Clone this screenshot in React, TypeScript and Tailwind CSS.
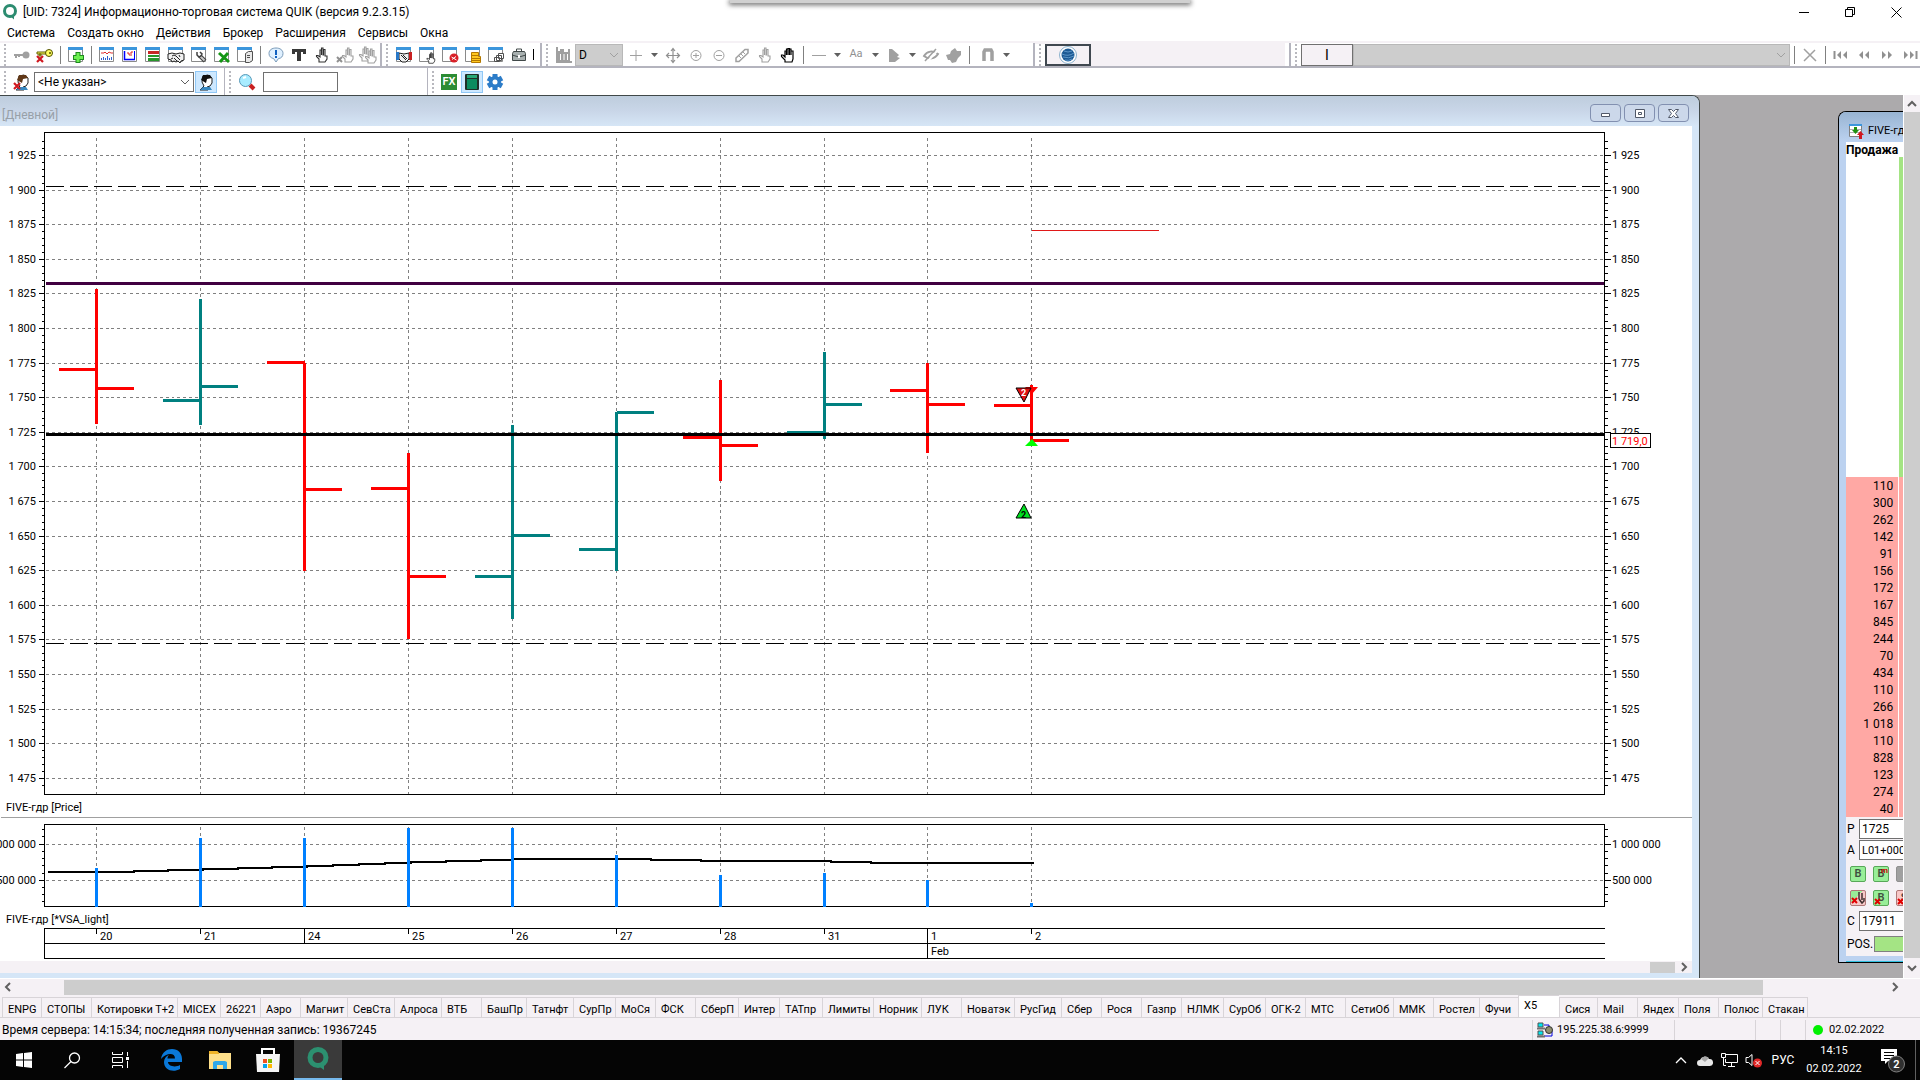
import { ReactNode } from "react"

const UI = "font-[Roboto,sans-serif]"

const TABS: [string, number][] = [
  ["ENPG", 39], ["СТОПЫ", 50], ["Котировки Т+2", 86], ["MICEX", 43], ["26221", 40], ["Аэро", 40],
  ["Магнит", 47], ["СевСта", 47], ["Алроса", 47], ["ВТБ", 40], ["БашПр", 45], ["Татнфт", 47],
  ["СурПр", 42], ["МоСя", 40], ["ФСК", 40], ["СберП", 43], ["Интер", 41], ["ТАТпр", 43],
  ["Лимиты", 51], ["Норник", 48], ["ЛУК", 40], ["Новатэк", 53], ["РусГид", 47], ["Сбер", 40],
  ["Рося", 40], ["Газпр", 40], ["НЛМК", 42], ["СурОб", 42], ["ОГК-2", 40], ["МТС", 40],
  ["СетиОб", 48], ["ММК", 40], ["Ростел", 46], ["Фучи", 39], ["X5", 41], ["Сися", 38],
  ["Mail", 40], ["Яндех", 41], ["Поля", 40], ["Полюс", 44], ["Стакан", 45],
]

const MENU = ["Система", "Создать окно", "Действия", "Брокер", "Расширения", "Сервисы", "Окна"]

const ASKS = [
  "110", "300", "262", "142", "91", "156", "172", "167", "845", "244",
  "70", "434", "110", "266", "1 018", "110", "828", "123", "274", "40",
]

const RED = "#ff0000"
const TEAL = "#008080"

// day label, x, high, low, open, close, colour, top of the volume bar
type Bar = { day: string; x: number; h: number; l: number; o: number; c: number; color: string; vol: number }

const BARS: Bar[] = [
  { day: "20", x: 96, h: 288, l: 423, o: 369, c: 388, color: RED, vol: 867 },
  { day: "21", x: 200, h: 298, l: 424, o: 400, c: 386, color: TEAL, vol: 837 },
  { day: "24", x: 304, h: 362, l: 570, o: 362, c: 489, color: RED, vol: 837 },
  { day: "25", x: 408, h: 452, l: 638, o: 488, c: 576, color: RED, vol: 827 },
  { day: "26", x: 512, h: 424, l: 618, o: 576, c: 535, color: TEAL, vol: 827 },
  { day: "27", x: 616, h: 411, l: 570, o: 549, c: 412, color: TEAL, vol: 854 },
  { day: "28", x: 720, h: 379, l: 480, o: 437, c: 445, color: RED, vol: 874 },
  { day: "31", x: 824, h: 351, l: 438, o: 432, c: 404, color: TEAL, vol: 872 },
  { day: "1", x: 927, h: 362, l: 452, o: 390, c: 404, color: RED, vol: 879 },
  { day: "2", x: 1031, h: 384, l: 440, o: 405, c: 440, color: RED, vol: 902 },
]

const priceY = (p: number) => Math.round(155 + (1925 - p) * 1.384)
const PRICES = Array.from({ length: 19 }, (_, i) => 1925 - i * 25)
const MINOR = Array.from({ length: 94 }, (_, i) => 1935 - i * 5)
const VOL_MINOR = [829, 836, 851, 858, 865, 873, 887, 894, 901]

const fmt = (n: number) => String(n).replace(/^(\d)(\d{3})$/, "$1 $2")

function Chart() {
  return (
    <svg viewBox="0 126 1692 835" className="block w-full bg-white text-[11px]">
      <g transform="translate(0.5 0.5)" shapeRendering="crispEdges" fill="none" stroke="#000">
        <g stroke="#808080" strokeDasharray="3 3">
          {PRICES.map((p) => (
            <path key={p} d={`M45 ${priceY(p)}H1603`} />
          ))}
          {BARS.map((b) => (
            <path key={b.day} d={`M${b.x} 137V794M${b.x} 826V906`} />
          ))}
          <path d="M45 844H1603M45 880H1603" />
        </g>
        <path d="M44 132H1604V794H44ZM44 824H1604V906H44Z" />
        <path d="M1604 928H44V958H1604M44 943H1604" />
        <path d="M0 817H1692" stroke="#a0a0a0" />
        {MINOR.map((p) => (
          <path key={p} d={`M41 ${priceY(p)}H44M1604 ${priceY(p)}H1607`} />
        ))}
        {PRICES.map((p) => (
          <path key={p} d={`M38 ${priceY(p)}H44M1604 ${priceY(p)}H1610`} />
        ))}
        {VOL_MINOR.map((y) => (
          <path key={y} d={`M41 ${y}H44M1604 ${y}H1607`} />
        ))}
        <path d="M38 844H44M38 880H44M1604 844H1610M1604 880H1610" />

        <path d="M45 186H1604M45 643H1604" strokeDasharray="18 6" />
        <path d="M45 283H1603" stroke="#400040" strokeWidth="3" />

        {BARS.map((b) => (
          <path
            key={b.day}
            d={`M${b.x} ${b.h}V${b.l}M${b.x - 38} ${b.o}H${b.x}M${b.x} ${b.c}H${b.x + 37}`}
            stroke={b.color}
            strokeWidth="3"
          />
        ))}
        <path d="M45 434H1603" strokeWidth="3" />
        <path d="M1031 230H1158" stroke="#e01818" />

        <path
          d="M47 871H133V870H167V869H202V868H237V867H271V866H306V865H332V864H358V863H384V862H410V861H445V860H480V859H512V858H650V859H700V860H830V861H870V862H1033"
          strokeWidth="2"
        />
        {BARS.map((b) => (
          <path key={b.day} d={`M${b.x} ${b.vol}V906`} stroke="#0080ff" strokeWidth="3" />
        ))}
        {BARS.map((b) => (
          <path key={b.day} d={`M${b.x} 928V${b.day === "24" ? 943 : b.day === "1" ? 958 : 933}`} />
        ))}
      </g>

      <path d="M1025 387h13l-6 7z" fill="#f00" />
      <path d="M1016 388h15l-7 14z" fill="#e01010" stroke="#000" />
      <text x="1021" y="396" className="text-[9px] font-bold" fill="#fff">2</text>
      <path d="M1025 446h13l-6-7z" fill="#0f0" />
      <path d="M1016 518h15l-7-14z" fill="#00e020" stroke="#000" />
      <text x="1021" y="518" className="text-[9px] font-bold">2</text>

      {PRICES.map((p) => (
        <g key={p}>
          <text x="36" y={priceY(p) + 4} textAnchor="end">{fmt(p)}</text>
          <text x="1612" y={priceY(p) + 4}>{fmt(p)}</text>
        </g>
      ))}
      <path d="M1610.500 433.500h40v14h-40z" fill="#fff" stroke="#000" shapeRendering="crispEdges" />
      <text x="1612" y="445" fill="#f00">1 719,0</text>

      <text x="36" y="848" textAnchor="end">1 000 000</text>
      <text x="36" y="884" textAnchor="end">500 000</text>
      <text x="1612" y="848">1 000 000</text>
      <text x="1612" y="884">500 000</text>
      <text x="6" y="811">FIVE-гдр [Price]</text>
      <text x="6" y="923">FIVE-гдр [*VSA_light]</text>
      {BARS.map((b) => (
        <text key={b.day} x={b.x + 4} y="940">{b.day}</text>
      ))}
      <text x="931" y="955">Feb</text>
    </svg>
  )
}

function Tool({ label, children }: { label: string; children: ReactNode }) {
  return (
    <button type="button" aria-label={label} className="flex h-6 w-[23px] shrink-0 items-center justify-center">
      <svg width="16" height="16" viewBox="0 0 16 16" className="overflow-visible" fill="none">
        {children}
      </svg>
    </button>
  )
}

const Sep = () => (
  <div className="flex w-2 shrink-0 justify-center">
    <div className="h-[18px] w-px bg-[#808080]" />
  </div>
)

const Grip = () => <div className="mx-1 h-[22px] w-0 shrink-0 border-l-2 border-dotted border-[#b8b8be]" />

const DropArrow = () => (
  <button type="button" aria-label="Список" className="flex w-[14px] shrink-0 items-center justify-center">
    <svg width="7" height="4" viewBox="0 0 7 4"><path d="M0 0h7L3.500 4z" fill="#606060" /></svg>
  </button>
)

// empty window frame that most of the left icons are built on
const Frame = () => (
  <>
    <path d="M.5 1.500h14v13H.5z" fill="#fff" stroke="#8a8a8a" />
    <path d="M0 0h15v3H0z" fill="#3c96dc" />
  </>
)

const Hand = ({ color }: { color: string }) => (
  <path
    d="M5 15v-3L2.500 9.500v-1H4L6 10V3h1.500v5V1H9v7h.5V2.500H11V9h2v3l-2 3z"
    fill="#fff" stroke={color} strokeWidth="1.100"
  />
)

const Cross = () => <path d="M0 9l6 6M6 9l-6 6" stroke="#d01820" strokeWidth="2.200" />

const Chevron = ({ d, color = "#606060", w = 2 }: { d: string; color?: string; w?: number }) => (
  <svg width="10" height="10" viewBox="0 0 10 10" fill="none" className="shrink-0">
    <path d={d} stroke={color} strokeWidth={w} />
  </svg>
)
const UP = "M1 7l4-4 4 4"
const DOWN = "M1 3l4 4 4-4"
const LEFT = "M7 1L3 5l4 4"
const RIGHT = "M3 1l4 4-4 4"

function MainTools() {
  return (
    <div className="flex h-[25px] items-center border-r-2 border-b-2 border-[#b4b4be] pr-px">
      <Grip />
      <Tool label="Соединить">
        <circle cx="12" cy="8" r="3.500" fill="#a0a0a0" />
        <path d="M0 8h10M2 8v3M5 8v2" stroke="#a0a0a0" strokeWidth="2" />
      </Tool>
      <Tool label="Разорвать">
        <path d="M0 5h10v2H0zM2 7h2v2H2z" fill="#ffff60" stroke="#606000" />
        <circle cx="12" cy="6" r="3.500" fill="#ffff60" stroke="#505000" />
        <circle cx="13" cy="6" r="1" fill="#505000" />
        <Cross />
      </Tool>
      <Sep />
      <Tool label="Создать окно">
        <Frame />
        <path d="M10 5v11M5 10.500h11" stroke="#1e8a1e" strokeWidth="5" />
        <path d="M10 6v9M6 10.500h9" stroke="#6cf050" strokeWidth="3" />
      </Tool>
      <Sep />
      <Tool label="График">
        <Frame />
        <path d="M2 6h3l1-1 2 2 2-2 2 1h2" stroke="#e03030" />
        <path d="M2.500 13v-2M4.500 13v-3M6.500 13v-2M8.500 13v-4M10.500 13v-2M12.500 13v-3" stroke="#3060d0" />
      </Tool>
      <Tool label="Диаграмма">
        <Frame />
        <path d="M2.500 4v8.500H13" stroke="#00f" strokeWidth="1.500" />
        <path d="M12.500 4v8" stroke="#00f" />
        <path d="M5 6h2v2h1M9 9V5h2" stroke="#e02020" />
      </Tool>
      <Tool label="Стакан">
        <Frame />
        <path d="M3 4h11v3H3z" fill="#c82828" />
        <path d="M3 8h11v2H3zM3 11h11v3H3z" fill="#28962c" />
      </Tool>
      <Tool label="Сделки">
        <Frame />
        <path d="M0 7l4-1 4 1 4-1 4 1v6l-3 1-1 2-2-2-2 1-2-1-2 1-1-2-3-1z" fill="#f0f0f0" stroke="#202020" />
        <path d="M4 9l2-1 2 1 4 4M6 11l3 3M3 12l2-1M11 8l1 2" stroke="#202020" />
      </Tool>
      <Tool label="Настройка">
        <Frame />
        <path d="M9 9l5 5" stroke="#404040" strokeWidth="4" />
        <path d="M9 9l4.500 4.500" stroke="#c8c8c8" strokeWidth="2" />
        <path d="M6 5v3l2 2 2-1 1-2-2-2" stroke="#404040" strokeWidth="1.500" />
      </Tool>
      <Tool label="Excel">
        <Frame />
        <path d="M5 6l10 9M14 6L6 15" stroke="#149614" strokeWidth="3" />
      </Tool>
      <Tool label="База данных">
        <Frame />
        <path d="M8.500 6.500l3-2h4v9l-3 2h-4z" fill="#e8e8e8" stroke="#505050" />
        <path d="M10 8.500h3M10 10.500h3" stroke="#505050" />
      </Tool>
      <Sep />
      <Tool label="Сообщения">
        <path d="M8 1c4 0 7 2 7 5.500 0 3-2 5-4.500 5L8 15l-2.500-3.500C3 11 1 9.500 1 6.500 1 3 4 1 8 1z" fill="#dff0ff" stroke="#7a9ab8" />
        <path d="M7 3h2v5H7zM7 9h2v2H7z" fill="#1060c0" />
      </Tool>
      <Tool label="Текст"><path d="M1 2h14v5h-3V5h-2v9H6V5H4v2H1z" fill="#383838" /></Tool>
      <Tool label="Новая заявка"><Hand color="#303030" /></Tool>
      <Tool label="Снять заявку">
        <g transform="translate(3 0)"><Hand color="#a0a0a0" /></g>
        <path d="M0 10l5 5M5 10l-5 5" stroke="#909090" strokeWidth="2" />
      </Tool>
      <Tool label="Снять все заявки">
        <g transform="translate(-3 -1)"><Hand color="#a0a0a0" /></g>
        <g transform="translate(3 1)"><Hand color="#a0a0a0" /></g>
      </Tool>
    </div>
  )
}

function TableTools() {
  return (
    <div className="flex h-[25px] items-center border-r-2 border-b-2 border-[#b4b4be] pr-[6px]">
      <Grip />
      <Tool label="Таблица сделок">
        <Frame />
        <path d="M3 6l5 1 5-1v6l-3 3H6l-3-3z" fill="#f0f0f0" stroke="#202020" />
        <path d="M5 8l5 5M7 8l4 4" stroke="#202020" />
        <path d="M0 5h3v8H0z" fill="#2878c8" />
        <path d="M13 5h3v8h-3z" fill="#c82020" />
      </Tool>
      <Tool label="Таблица заявок">
        <Frame />
        <g transform="translate(6 5) scale(0.75)"><Hand color="#303030" /></g>
      </Tool>
      <Tool label="Стоп-заявки">
        <Frame />
        <circle cx="12" cy="11" r="4.500" fill="#d82028" />
        <path d="M9.500 10l5 3M10 12.500l4-3" stroke="#fff" />
      </Tool>
      <Tool label="Лимиты по деньгам">
        <Frame />
        <path d="M6.500 5.500h7v4h2v6h-9z" fill="#ffc820" stroke="#b47800" />
        <path d="M6 8.500h8M6 11.500h9M7 13.500h8" stroke="#b47800" />
      </Tool>
      <Tool label="Лимиты по бумагам">
        <Frame />
        <path d="M10.500 6.500h5v5h-5zM8.500 8.500h5v5h-5zM6.500 10.500h5v4h-5z" fill="#fff" stroke="#505050" />
      </Tool>
      <Tool label="Портфель">
        <path d="M2.500 4.500h11l1 2v7h-13v-7z" fill="#a8b0b0" stroke="#404848" />
        <path d="M5.500 4V2h5v2M1 8l7 2 7-2" stroke="#404848" />
        <path d="M7 8h2v3H7z" fill="#fff" />
      </Tool>
      <div className="ml-[3px] h-[11px] w-px bg-black" />
    </div>
  )
}

function ChartTools() {
  return (
    <div className="flex h-[25px] items-center border-r-2 border-b-2 border-[#b4b4be] pr-5">
      <Grip />
      <Tool label="Тип графика">
        <path d="M0 0h2v4h2V2h4v3h4V2h2v12h2v2H0z" fill="#a0a0a0" />
        <path d="M4.500 7v6M8 7v6M11.500 7v6" stroke="#fff" />
      </Tool>
      <div className="relative">
        <select aria-label="Интервал" disabled className="block h-[22px] w-12 appearance-none border border-[#b8b8b8] bg-[#cdcdcd] pl-[3px] text-xs text-black opacity-100">
          <option>D</option>
        </select>
        <div className="pointer-events-none absolute top-[6px] right-1"><Chevron d={DOWN} color="#a0a0a0" w={1} /></div>
      </div>
      <div className="w-px" />
      <Tool label="Курсор"><path d="M8 3v11M2 8.500h12" stroke="#a0a0a0" /></Tool>
      <DropArrow />
      <Tool label="Переместить">
        <path d="M8 2v13M2 8.500h13M6 4l2-2.500L10 4M6 13l2 2.500 2-2.500M4 6L1.500 8.500 4 11M12 6l2.500 2.500L12 11" stroke="#909090" strokeWidth="1.200" />
      </Tool>
      <Tool label="Увеличить"><circle cx="8" cy="8.500" r="5" stroke="#a0a0a0" /><path d="M5 8.500h6M8 6v5" stroke="#a0a0a0" /></Tool>
      <Tool label="Уменьшить"><circle cx="8" cy="8.500" r="5" stroke="#a0a0a0" /><path d="M5 8.500h6" stroke="#a0a0a0" /></Tool>
      <Tool label="Линейка">
        <path d="M2 11L11 2.500h3V6L5 14.500H2z" stroke="#a0a0a0" strokeWidth="1.500" />
        <path d="M5 9l2 2M7 7l2 2M9 5l2 2" stroke="#a0a0a0" />
      </Tool>
      <Tool label="Заявка"><Hand color="#a0a0a0" /></Tool>
      <Tool label="Рука">
        <path d="M5 15v-2L1.500 9.500V8H3l2 2V4h1.500v4V2H8v6-6.500h1.500V8 2H11v6-4h2v8l-1 3z" fill="#fff" stroke="#000" strokeWidth="1.200" />
      </Tool>
      <Sep />
      <Tool label="Линия"><path d="M1 8.500h14" stroke="#a0a0a0" /></Tool>
      <DropArrow />
      <button type="button" className="w-6 text-[11px] text-[#909090]">Aa</button>
      <DropArrow />
      <Tool label="Фигуры"><path d="M3 2h3l7 6-2 2 3 1-5 4H3z" fill="#a0a0a0" /></Tool>
      <DropArrow />
      <Tool label="Скрыть">
        <path d="M1 9c3-5 9-6 14-2-3 5-9 6-14 2z" stroke="#a0a0a0" strokeWidth="2" />
        <path d="M4 15L15 3" stroke="#fff" strokeWidth="2" />
        <path d="M2 14L13 2" stroke="#a0a0a0" strokeWidth="1.500" />
      </Tool>
      <Tool label="Удалить"><path d="M0 8l4-1 1-3 4-3 2 3h4v4l-3 3-2 4-4 1-2-3H2z" fill="#a0a0a0" /></Tool>
      <Sep />
      <div className="w-[3px]" />
      <Tool label="Магнит"><path d="M4 14V5l1-2h6l1 2v9" stroke="#a0a0a0" strokeWidth="3.500" /></Tool>
      <DropArrow />
    </div>
  )
}

function PersonIcon({ x }: { x?: boolean }) {
  return (
    <>
      <path d="M5 2l5-1 4 3v5l-2 3-3 1 1 3H2l4-4-2-4z" fill="#fff" stroke="#202020" />
      <path d="M3 6l2-5h7l2 3-5 1-1 4z" fill={x ? "#603818" : "#101010"} />
      <path d="M2 16l3-3h7l2 3z" fill="#3888c0" />
      {x && <Cross />}
    </>
  )
}

function Toolbars() {
  const active = "flex h-[22px] w-[22px] items-center justify-center border border-[#90c8f6] bg-[#cde8ff]"
  return (
    <>
      <div className="flex h-[27px] items-start overflow-hidden border-t-2 border-[#f5f1f5]">
        <MainTools />
        <TableTools />
        <ChartTools />
        <div className="flex h-[25px] items-center border-b-2 border-[#b4b4be] bg-[#f5f1f5]">
          <div className="bg-white"><Grip /></div>
          <button type="button" aria-label="Сеть" className="flex h-[22px] w-[46px] items-center justify-center border-2 border-[#404850] bg-[#f5f1f5]">
            <svg width="18" height="18" viewBox="0 0 18 18">
              <circle cx="9" cy="9" r="8.500" fill="#fff" stroke="#8ab0cc" />
              <circle cx="9" cy="9" r="6.500" fill="#1c5a94" />
              <path d="M5 5q4 2 8 0M3 8q6 3 12-1M4 11q6 2 11-1M6 14q4 1 7-1" stroke="#5c96c8" fill="none" />
            </svg>
          </button>
          <div className="w-[194px]" />
          <div className="h-full w-[6px] border-r-2 border-[#b4b4be] bg-white" />
        </div>
        <div className="flex h-[25px] min-w-0 flex-1 items-center border-b-2 border-[#b4b4be]">
          <Grip />
          <button type="button" className="h-[22px] w-[52px] shrink-0 border border-[#707070] bg-[#f5f1f5] text-sm leading-4">I</button>
          <div className="relative min-w-0 flex-1">
            <select aria-label="История" disabled className="block h-[22px] w-full appearance-none border border-[#b8b8b8] bg-[#cdcdcd] opacity-100" />
            <div className="pointer-events-none absolute top-[6px] right-1"><Chevron d={DOWN} color="#a0a0a0" w={1} /></div>
          </div>
          <Sep />
          <Tool label="Очистить"><path d="M2 2l12 12M13 3L2 14" stroke="#a0a0a0" strokeWidth="1.500" /></Tool>
          <Sep />
          <div className="flex w-[91px] shrink-0 items-center justify-around">
            {[
              ["В начало", "M1.500 4v8", "M8 4v8L4 8zM14 4v8L10 8z"],
              ["Назад", "", "M7 4v8L3 8zM13 4v8L9 8z"],
              ["Вперёд", "", "M3 4v8l4-4zM9 4v8l4-4z"],
              ["В конец", "M14.500 4v8", "M2 4v8l4-4zM8 4v8l4-4z"],
            ].map(([label, bar, arrows]) => (
              <Tool key={label} label={label}>
                <path d={bar} stroke="#909090" strokeWidth="2" />
                <path d={arrows} fill="#909090" />
              </Tool>
            ))}
          </div>
        </div>
      </div>

      <div className="flex h-[27px] items-center">
        <Grip />
        <Tool label="Клиент"><PersonIcon x /></Tool>
        <div className="relative ml-px">
          <select aria-label="Клиентский счёт" className="block h-5 w-40 appearance-none border border-[#707070] bg-white pl-[3px] text-xs leading-4">
            <option>&lt;Не указан&gt;</option>
          </select>
          <div className="pointer-events-none absolute top-[5px] right-1"><Chevron d={DOWN} w={1} /></div>
        </div>
        <div className={`ml-px ${active}`}>
          <Tool label="Выбрать клиента"><PersonIcon /></Tool>
        </div>
        <div className="ml-[7px] h-full w-px bg-[#b4b4be]" />
        <Grip />
        <Tool label="Найти">
          <circle cx="6.500" cy="6.500" r="6" fill="#a8ecff" stroke="#5898b8" />
          <path d="M4 4l3-1" stroke="#fff" strokeWidth="2" />
          <path d="M11 11l4 4" stroke="#c82020" strokeWidth="4" />
        </Tool>
        <div className="w-[5px]" />
        <input aria-label="Поиск" className="h-5 w-[75px] border border-[#707070] px-1 text-xs" />
        <div className="ml-[89px] h-full w-px bg-[#b4b4be]" />
        <Grip />
        <button type="button" className="ml-[3px] h-4 w-4 bg-[#2c8c34] text-[11px] leading-4 font-semibold text-white">FX</button>
        <div className={`ml-1 ${active}`}>
          <Tool label="Терминал">
            <rect x="1" y="0" width="14" height="16" rx="1" fill="#203028" />
            <rect x="3" y="1" width="10" height="3" fill="#28a878" />
            <rect x="3" y="5" width="10" height="10" fill="#0c8c60" />
          </Tool>
        </div>
        <Tool label="Настройки">
          <path d="M8 0v16M1 4l14 8M1 12l14-8" stroke="#2c7cc8" strokeWidth="5" />
          <circle cx="8" cy="8" r="6" fill="#2c7cc8" />
          <circle cx="8" cy="8" r="2.500" fill="#fff" />
        </Tool>
      </div>
    </>
  )
}

function ChartWindow() {
  const btn = "flex h-[18px] w-[31px] items-center justify-center rounded-sm border border-[#8290b0] bg-[#ccd8ea]"
  return (
    <section className="flex min-w-0 flex-1 flex-col overflow-hidden rounded-tr-lg border-t border-r border-[#404848] bg-[#d5e6f7]">
      <header className="flex h-[30px] items-center gap-[3px] bg-linear-to-b from-[#becddd] via-[#c9d6e8] to-[#d6e6f6] pt-1 pr-[10px]">
        <h2 className="flex-1 pt-1 pl-[2px] text-xs text-[#98a0a8]">[Дневной]</h2>
        <button type="button" aria-label="Свернуть" className={btn}>
          <svg width="11" height="9" fill="#fff" stroke="#505868"><path d="M1.500 4.500h8v3h-8z" /></svg>
        </button>
        <button type="button" aria-label="Развернуть" className={btn}>
          <svg width="10" height="9" fill="#fff" stroke="#505868"><path d="M.5.5h9v8h-9zM3.500 3.500h3v2h-3z" /></svg>
        </button>
        <button type="button" aria-label="Закрыть" className={btn}>
          <svg width="11" height="9" fill="#fff" stroke="#505868"><path d="M.5.5h3l2 2 2-2h3l-3 4 3 4h-3l-2-2-2 2h-3l3-4z" /></svg>
        </button>
      </header>
      <div className="mr-[7px]">
        <Chart />
        <div className="flex h-3 items-center justify-end bg-[#f5f1f5]">
          <div className="h-[11px] w-[25px] bg-[#cdcdcd]" />
          <div className="flex w-[17px] justify-center"><Chevron d={RIGHT} /></div>
        </div>
      </div>
      <div className="h-[5px]" />
    </section>
  )
}

function OrderButton({ children, tone, x }: { children: ReactNode; tone: string; x?: boolean }) {
  return (
    <button type="button" className={`relative h-4 w-4 shrink-0 rounded-xs border text-[11px] leading-[14px] font-semibold ${tone}`}>
      {children}
      {x && (
        <svg width="7" height="7" viewBox="0 0 7 7" className="absolute bottom-0 left-0">
          <path d="M1 1l5 5M6 1L1 6" stroke="#e00000" strokeWidth="2" />
        </svg>
      )}
    </button>
  )
}

function QuoteWindow() {
  const green = "border-[#58a858] bg-[#98ee98] text-[#405040]"
  const pink = "border-[#b07878] bg-[#f8c8c8] text-[#504040]"
  const field = "h-5 w-28 shrink-0 border border-[#707070] bg-white px-[2px]"
  return (
    <section className="mt-4 mb-[15px] flex w-[65px] shrink-0 flex-col overflow-hidden rounded-tl-lg border-t border-b border-l border-black bg-[#bcd2f0] pl-[7px] text-xs">
      <header className="-ml-[7px] flex h-[30px] shrink-0 items-center gap-1 bg-linear-to-b from-[#98b4d2] to-[#bcd2f0] pt-2 pl-[10px] text-[11px]">
        <svg width="15" height="15" viewBox="0 0 15 15" className="shrink-0" fill="none">
          <path d="M.5.5h12v12H.5z" fill="#fff" stroke="#808080" />
          <path d="M0 0h13v2H0z" fill="#3c96dc" />
          <path d="M1 5.500h11M1 8.500h11" stroke="#b0b0b0" />
          <path d="M5 3h3v3h2L6.500 10 3 6h2z" fill="#209010" />
          <path d="M10 15v-4H8l3.500-4 3.500 4h-2v4z" fill="#d01820" />
        </svg>
        <span className="whitespace-nowrap">FIVE-гдр</span>
      </header>
      <div className="flex min-h-0 flex-1 bg-[#f5f1f5]">
        <table className="w-[53px] shrink-0 border-r border-white bg-white">
          <thead>
            <tr className="h-[15px]"><th className="p-0 pt-px text-left leading-[14px] font-bold">Продажа</th></tr>
          </thead>
          <tbody>
            <tr className="h-[320px]"><td /></tr>
            {ASKS.map((n, i) => (
              <tr key={i} className="h-[17px] bg-[#ffa8a4]">
                <td className="p-0 pt-px pr-[5px] text-right leading-4">{n}</td>
              </tr>
            ))}
          </tbody>
        </table>
        <div className="flex w-1 flex-col">
          <div className="h-[15px] bg-white" />
          <div className="h-[320px] bg-[#a4e484]" />
          <div className="h-[340px] bg-[#ffa8a4]" />
        </div>
      </div>
      <div className="w-60 shrink-0 bg-[#f5f1f5] pl-px">
        <label className="flex items-center pt-[2px]"><span className="w-3">P</span><input className={field} defaultValue="1725" /></label>
        <label className="flex items-center pt-px"><span className="w-3">A</span><input className={`text-[11px] ${field}`} defaultValue="L01+00000F00" /></label>
        <div className="flex gap-[7px] pt-[6px] pl-[3px]">
          <OrderButton tone={green}>B</OrderButton>
          <OrderButton tone={green}>B<sup className="absolute top-0 right-0 text-[8px] leading-2 text-[#d00000]">m</sup></OrderButton>
          <OrderButton tone="border-[#909090] bg-[#a0a0a0] text-white">.</OrderButton>
        </div>
        <div className="flex gap-[7px] pt-2 pl-[3px]">
          <button type="button" aria-label="Снять заявки" className="h-4 w-4 shrink-0 rounded-xs border border-[#b07878] bg-linear-135 from-[#98ee98] from-40% to-[#f8c8c8] to-40%">
            <svg width="14" height="14" viewBox="0 0 14 14" fill="none">
              <path d="M8 1v7M11 2v7M8 8l3 4 2-2V7" stroke="#403030" strokeWidth="1.500" />
              <path d="M1 7l5 5M6 7l-5 5" stroke="#e00000" strokeWidth="2" />
            </svg>
          </button>
          <OrderButton tone={green} x>B</OrderButton>
          <OrderButton tone={pink} x>S</OrderButton>
        </div>
        <label className="flex items-center pt-[5px]"><span className="w-3">C</span><input className={field} defaultValue="17911" /></label>
        <div className="flex items-center pt-[5px] pb-1">
          <span className="w-[27px]">POS.</span>
          <div className="h-4 w-24 border border-[#808080] bg-[#a4e484]" />
        </div>
      </div>
      <div className="h-[6px] shrink-0 border-b border-[#30c0e0]" />
    </section>
  )
}

function Taskbar() {
  const item = "flex h-10 items-center justify-center"
  return (
    <footer className="flex h-10 items-center bg-[#050505] text-xs text-white">
      <button type="button" aria-label="Пуск" className={`${item} w-12`}>
        <svg width="16" height="16" viewBox="0 0 16 16" fill="#fff"><path d="M0 2l7-1v6.500H0zM8 1l8-1v7.500H8zM0 8.500h7V15l-7-1zM8 8.500h8V16l-8-1z" /></svg>
      </button>
      <button type="button" aria-label="Поиск" className={`${item} w-12`}>
        <svg width="17" height="17" viewBox="0 0 17 17" fill="none" stroke="#fff" strokeWidth="1.300"><circle cx="10.500" cy="6" r="5" /><path d="M7 9.500L.5 16" /></svg>
      </button>
      <button type="button" aria-label="Представление задач" className={`${item} w-12`}>
        <svg width="17" height="16" viewBox="0 0 17 16" fill="none" stroke="#fff">
          <path d="M.5 0v2.500h10V0M.5 5.500h10v5H.5zM.5 16v-2.500h10V16M15.500 0v4M15.500 9v7" />
          <path d="M14 5h3v3h-3z" fill="#fff" stroke="none" />
        </svg>
      </button>
      <button type="button" aria-label="Edge" className={`${item} w-[54px]`}>
        <svg width="21" height="22" viewBox="0 0 21 22" fill="#0a78d8">
          <path d="M0 10C1 3 6 0 11 0c6 0 10 4 10 10v3H7c0 4 7 6 12 3v4c-7 4-16 1-16-7 0-3 2-6 5-7-1 1-1.500 2-1.500 3.500H14C14 3 5 4 0 10z" />
        </svg>
      </button>
      <button type="button" aria-label="Проводник" className={`${item} w-11`}>
        <svg width="22" height="18" viewBox="0 0 22 18">
          <path d="M0 0h8l2 2h12v16H0z" fill="#ffe08a" />
          <path d="M0 0h8l2 2v1H0z" fill="#f0b428" />
          <path d="M4 18v-7l2-1h10l2 1v7h-4v-4H8v4z" fill="#30a8e8" />
        </svg>
      </button>
      <button type="button" aria-label="Store" className={`${item} w-[52px]`}>
        <svg width="24" height="24" viewBox="0 0 24 24">
          <path d="M6 6V1h12v5" fill="none" stroke="#fff" strokeWidth="2" />
          <path d="M0 6h24l-1 18H1z" fill="#f5f5f5" />
          <path d="M7 11h4v4H7z" fill="#f05020" /><path d="M12 11h4v4h-4z" fill="#7cb800" />
          <path d="M7 16h4v4H7z" fill="#00a4ee" /><path d="M12 16h4v4h-4z" fill="#ffb800" />
        </svg>
      </button>
      <button type="button" aria-label="QUIK" className={`${item} w-12 border-b-2 border-[#76b9ed] bg-[#3a3a3a]`}>
        <svg width="22" height="24" viewBox="0 0 22 24">
          <circle cx="11" cy="10.500" r="8" fill="none" stroke="#2c9070" strokeWidth="5" />
          <path d="M9 17l8 6V17z" fill="#2c9070" />
        </svg>
      </button>
      <div className="flex-1" />
      <button type="button" aria-label="Скрытые значки" className="flex w-6 justify-center">
        <svg width="12" height="8" viewBox="0 0 12 8" fill="none" stroke="#fff" strokeWidth="1.300"><path d="M1 7l5-5 5 5" /></svg>
      </button>
      <span className="flex w-6 justify-center">
        <svg width="16" height="11" viewBox="0 0 16 11"><path d="M3 11a3 3 0 010-6 5 5 0 019-1 3.500 3.500 0 011 7z" fill="#e8e8e8" /><path d="M4 4a5 5 0 018-1l-4 4z" fill="#a8a8a8" /></svg>
      </span>
      <span className="flex w-6 justify-center">
        <svg width="17" height="14" viewBox="0 0 17 14" fill="none" stroke="#fff"><path d="M4 1.500h12.500v8H4.500V6M.5.5h4v4h-4zM2.500 5v7.500H5M10.500 10v3M7 13.500h7" /></svg>
      </span>
      <span className="flex w-6 justify-center">
        <svg width="17" height="15" viewBox="0 0 17 15" fill="none">
          <path d="M1 4.500h2.500L7 1.500v11L3.500 9.500H1z" stroke="#fff" />
          <circle cx="12.500" cy="10" r="4.500" fill="#e02828" /><path d="M10.500 8l4 4M14.500 8l-4 4" stroke="#fff" />
        </svg>
      </span>
      <span className="w-9 text-center">РУС</span>
      <div className="w-[66px] text-center text-[11px] leading-[18px]">
        <p>14:15</p>
        <p>02.02.2022</p>
      </div>
      <button type="button" aria-label="Уведомления" className="flex w-12 justify-center pl-1">
        <svg width="24" height="26" viewBox="0 0 24 26">
          <path d="M0 2h16v12H7l-3 3v-3H0z" fill="#fff" />
          <path d="M3 5.500h10M3 8.500h10M3 11.500h6" stroke="#000" />
          <circle cx="15.500" cy="17" r="8" fill="#303030" stroke="#808080" />
          <text x="15.500" y="21" textAnchor="middle" fill="#fff" className="text-[11px] font-semibold">2</text>
        </svg>
      </button>
      <div className="mr-1 h-10 w-px bg-[#606060]" />
    </footer>
  )
}

export default function App() {
  return (
    <div className={`relative flex min-h-screen flex-col overflow-hidden bg-white text-black ${UI}`}>
      <div className="absolute top-0 left-1/2 h-[3px] w-[460px] -translate-x-1/2 bg-[#d0d0d0] shadow-[0_1px_5px_1px_rgba(0,0,0,0.6)]" />
      <header className="flex h-6 items-center pl-[3px] text-xs">
        <svg width="14" height="16" viewBox="0 0 14 16">
          <circle cx="7" cy="7" r="5.500" fill="none" stroke="#2c8c70" strokeWidth="3" />
          <path d="M6 11l5 4.500V11z" fill="#2c8c70" />
        </svg>
        <h1 className="ml-[6px] flex-1">[UID: 7324] Информационно-торговая система QUIK (версия 9.2.3.15)</h1>
        <button type="button" aria-label="Свернуть" className="flex w-[46px] justify-center"><svg width="10" height="10" stroke="#000"><path d="M0 5.500h10" /></svg></button>
        <button type="button" aria-label="Восстановить" className="flex w-[46px] justify-center"><svg width="10" height="10" fill="none" stroke="#000"><path d="M.5 2.500h7v7h-7zM2.500 2V.5h7v7H8" /></svg></button>
        <button type="button" aria-label="Закрыть" className="mr-px flex w-[46px] justify-center"><svg width="11" height="11" stroke="#000"><path d="M.5.5l10 10M10.500.5l-10 10" /></svg></button>
      </header>
      <nav className="flex h-[17px] items-center gap-3 pl-[7px] text-xs">
        {MENU.map((m) => (
          <button key={m} type="button" className="leading-4">{m}</button>
        ))}
      </nav>

      <Toolbars />

      <main className="flex flex-1 bg-[#acaaac]">
        <ChartWindow />
        <div className="w-[138px] shrink-0" />
        <QuoteWindow />
        <div className="flex w-[17px] shrink-0 flex-col items-center border-l border-white bg-[#f5f1f5]">
          <div className="flex h-[17px] items-center"><Chevron d={UP} /></div>
          <div className="w-full flex-1 bg-[#cdcdcd]" />
          <div className="flex h-5 items-center"><Chevron d={DOWN} /></div>
        </div>
      </main>

      <div className="flex h-[17px] items-center border-t border-white bg-[#f5f1f5] pr-5 pl-[3px]">
        <Chevron d={LEFT} />
        <div className="mr-[127px] ml-[51px] h-[15px] flex-1 bg-[#cdcdcd]" />
        <Chevron d={RIGHT} />
      </div>
      <div className="h-[23px] border-b border-[#d8d4d8] bg-[#f5f1f5] pt-px pl-[2px]">
        <div role="tablist" className="flex h-full items-end text-[11px]">
          {TABS.map(([name, w]) => (
            <button
              key={name}
              type="button"
              role="tab"
              aria-selected={name === "X5"}
              style={{ width: w }}
              className={`shrink-0 overflow-hidden border-t border-l border-[#d8d4d8] pl-[5px] text-left whitespace-nowrap ${
                name === "X5" ? "h-[22px] bg-white pb-px" : "h-5 pt-1"
              }`}
            >
              {name}
            </button>
          ))}
          <div className="h-5 w-px bg-[#d8d4d8]" />
        </div>
      </div>
      <div className="flex h-[22px] items-center bg-[#f5f1f5] pt-px text-xs">
        <p className="flex-1 pl-[2px]">Время сервера: 14:15:34; последняя полученная запись: 19367245</p>
        <div className="flex h-5 w-[142px] items-center gap-[3px] border-l border-[#d8d4d8] pt-px pl-1 text-[11px]">
          <svg width="17" height="16" viewBox="0 0 17 16" fill="none">
            <path d="M7 3h5v3M7 14h8V9" stroke="#0000e0" />
            <path d="M1 1h5v4H1zM1 9h5v4H1z" fill="#00e8f0" stroke="#505050" />
            <path d="M0 6.500h8M0 14.500h8" stroke="#707070" strokeWidth="2" />
            <circle cx="12" cy="8" r="3.500" fill="#909070" stroke="#303030" />
          </svg>
          195.225.38.6:9999
        </div>
        <div className="h-5 w-[81px] border-l border-[#d8d4d8]" />
        <div className="h-5 w-[25px] border-l border-[#d8d4d8]" />
        <div className="h-5 w-[25px] border-l border-[#d8d4d8]" />
        <div className="flex h-5 w-[115px] items-center gap-[6px] border-l border-[#d8d4d8] pt-px pl-[7px] text-[11px]">
          <span className="h-[10px] w-[10px] rounded-full bg-[#00f000]" />
          02.02.2022
        </div>
      </div>
      <Taskbar />
    </div>
  )
}
